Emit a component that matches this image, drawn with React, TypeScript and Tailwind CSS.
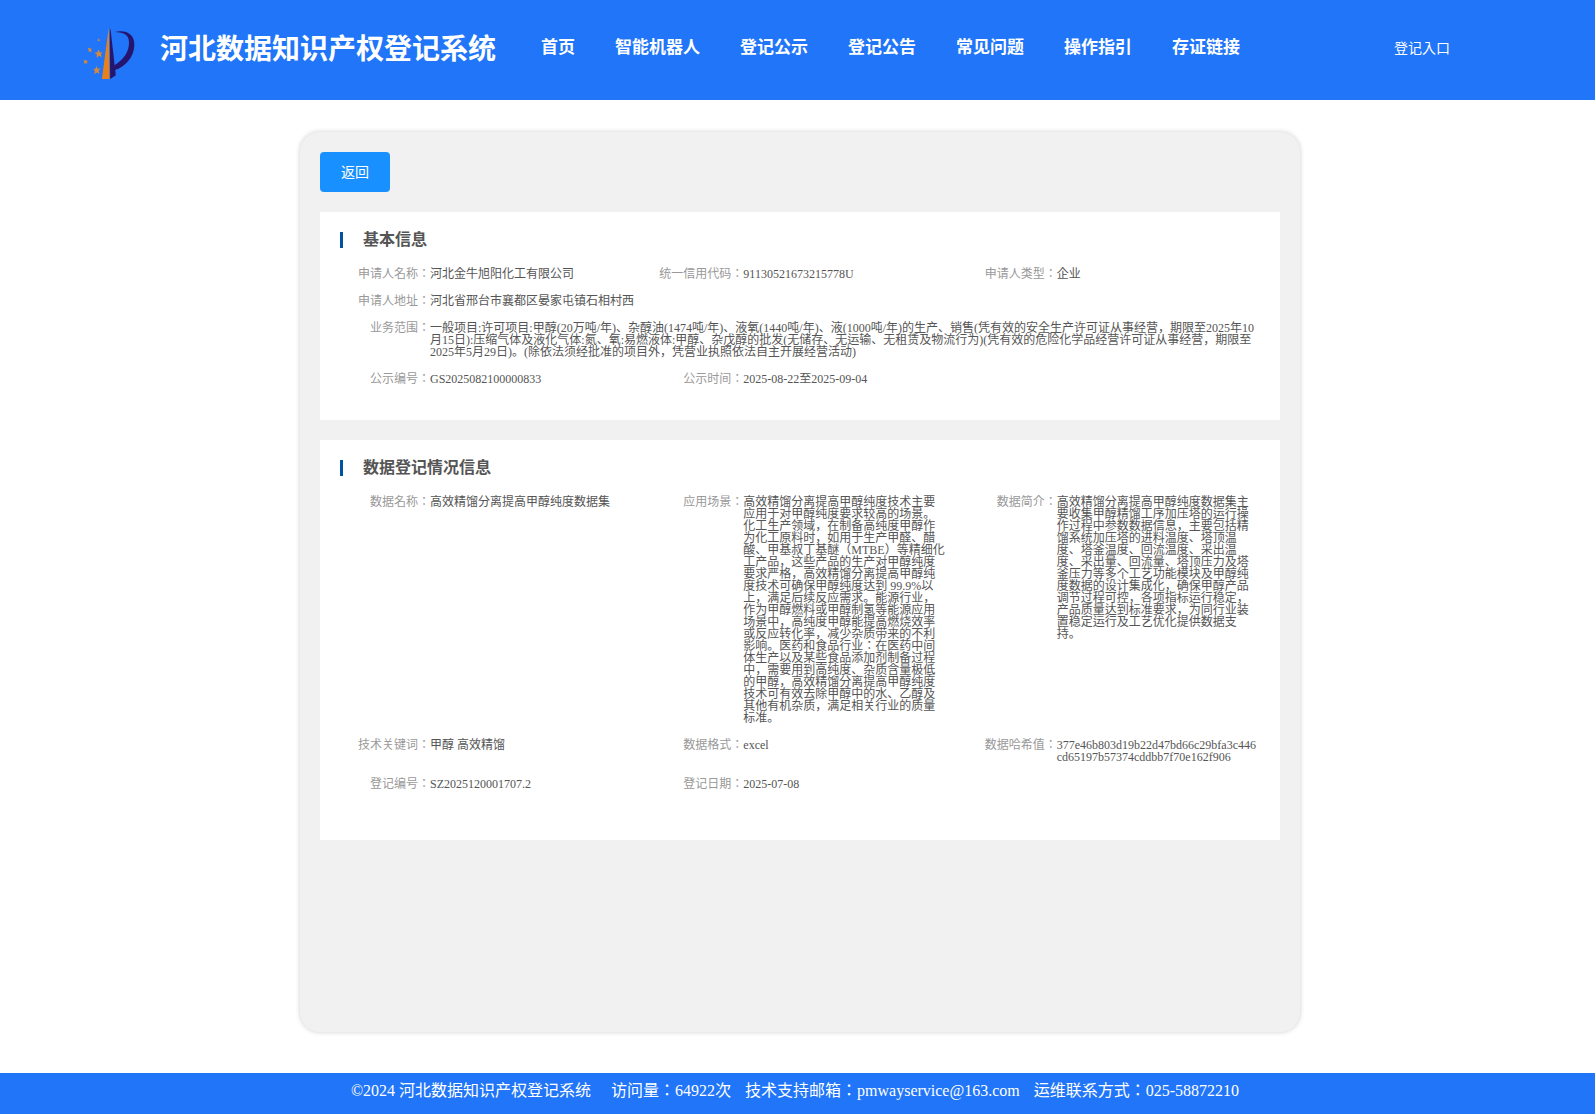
// App.tsx
type Item = {
  label: string;
  value: string;
  full?: boolean;
};

const navLinks = ['首页', '智能机器人', '登记公示', '登记公告', '常见问题', '操作指引', '存证链接'];

const basicInfo: Item[] = [
  { label: '申请人名称', value: '河北金牛旭阳化工有限公司' },
  { label: '统一信用代码', value: '91130521673215778U' },
  { label: '申请人类型', value: '企业' },
  { label: '申请人地址', value: '河北省邢台市襄都区晏家屯镇石相村西', full: true },
  {
    label: '业务范围',
    value:
      '一般项目:许可项目:甲醇(20万吨/年)、杂醇油(1474吨/年)、液氧(1440吨/年)、液(1000吨/年)的生产、销售(凭有效的安全生产许可证从事经营，期限至2025年10月15日):压缩气体及液化气体:氮、氧:易燃液体:甲醇、杂戊醇的批发(无储存、无运输、无租赁及物流行为)(凭有效的危险化学品经营许可证从事经营，期限至2025年5月29日)。(除依法须经批准的项目外，凭营业执照依法自主开展经营活动)',
    full: true,
  },
  { label: '公示编号', value: 'GS2025082100000833' },
  { label: '公示时间', value: '2025-08-22至2025-09-04' },
];

const dataInfo: Item[] = [
  { label: '数据名称', value: '高效精馏分离提高甲醇纯度数据集' },
  {
    label: '应用场景',
    value:
      '高效精馏分离提高甲醇纯度技术主要应用于对甲醇纯度要求较高的场景。化工生产领域，在制备高纯度甲醇作为化工原料时，如用于生产甲醛、醋酸、甲基叔丁基醚（MTBE）等精细化工产品，这些产品的生产对甲醇纯度要求严格，高效精馏分离提高甲醇纯度技术可确保甲醇纯度达到 99.9%以上，满足后续反应需求。能源行业，作为甲醇燃料或甲醇制氢等能源应用场景中，高纯度甲醇能提高燃烧效率或反应转化率，减少杂质带来的不利影响。医药和食品行业：在医药中间体生产以及某些食品添加剂制备过程中，需要用到高纯度、杂质含量极低的甲醇，高效精馏分离提高甲醇纯度技术可有效去除甲醇中的水、乙醇及其他有机杂质，满足相关行业的质量标准。',
  },
  {
    label: '数据简介',
    value:
      '高效精馏分离提高甲醇纯度数据集主要收集甲醇精馏工序加压塔的运行操作过程中参数数据信息，主要包括精馏系统加压塔的进料温度、塔顶温度、塔釜温度、回流温度、采出温度、采出量、回流量、塔顶压力及塔釜压力等多个工艺功能模块及甲醇纯度数据的设计集成化，确保甲醇产品调节过程可控，各项指标运行稳定，产品质量达到标准要求，为同行业装置稳定运行及工艺优化提供数据支持。',
  },
  { label: '技术关键词', value: '甲醇 高效精馏' },
  { label: '数据格式', value: 'excel' },
  { label: '数据哈希值', value: '377e46b803d19b22d47bd66c29bfa3c446cd65197b57374cddbb7f70e162f906' },
  { label: '登记编号', value: 'SZ2025120001707.2' },
  { label: '登记日期', value: '2025-07-08' },
];

function Logo() {
  return (
    <svg viewBox="20 14 160 160" className="w-[53px] h-[53px] mt-2.5 shrink-0" aria-hidden="true">
      {/* Tower */}
      <path d="M98 14 L100 171 L77 171 Z" fill="#e8811c" />
      <path d="M101 16 L104 28 L119 160 L102 171 Z" fill="#26156f" />
      {/* Bowl of the P */}
      <path
        d="M116 29 C148 21 176 34 175 68 C174 108 145 134 116 144 L114 130 C142 113 159 90 159 61 C159 39 145 29 116 29 Z"
        fill="#26156f"
      />
      {/* Stars */}
      <g fill="#d9883a">
        <path d="M67 82 L71 91 L79 90 L74 97 L77 105 L69 101 L61 107 L62 97 L54 92 L63 91 Z" />
        <path d="M60 131 L64 140 L73 139 L67 146 L70 155 L62 151 L54 157 L56 147 L51 141 L58 140 Z" />
        <path d="M28 111 L30 116 L35 116 L32 120 L33 126 L28 123 L22 125 L24 119 L21 114 L27 115 Z" />
        <path d="M37 76 L41 80 L47 79 L44 84 L46 90 L41 88 L36 89 L38 84 L34 80 Z" />
        <path d="M68 47 L69 51 L71 54 L68 57 L63 54 L66 52 Z" />
      </g>
    </svg>
  );
}

function InfoSection({ title, items, className }: { title: string; items: Item[]; className: string }) {
  return (
    <section className={`bg-white mt-5 pt-5 pl-5 ${className}`}>
      <h2 className="border-l-3 border-[#00549b] pl-5 text-base leading-4 font-bold text-[#555]">{title}</h2>
      <dl className="grid grid-cols-3 mt-5 text-xs leading-3">
        {items.map((item) => (
          <div key={item.label} className={`flex pr-5 pb-[15px] ${item.full ? 'col-span-3' : ''}`}>
            <dt className="w-[90px] shrink-0 text-right text-[#999]">{item.label}：</dt>
            <dd className="min-w-0 flex-1 wrap-break-word text-[#555]">{item.value}</dd>
          </div>
        ))}
      </dl>
    </section>
  );
}

export default function App() {
  return (
    <div className="min-h-screen flex flex-col bg-white font-['Liberation_Serif','Noto_Sans_CJK_JP',serif]">
      <header className="flex items-center min-h-[100px] pl-[83px] pr-[145px] pb-1 bg-[#2075f8] text-white">
        <Logo />
        <h1 className="ml-6 pt-1 text-[28px] leading-10 font-bold whitespace-nowrap">河北数据知识产权登记系统</h1>
        <nav className="flex gap-10 ml-[45px] text-[17px] leading-6 font-bold whitespace-nowrap">
          {navLinks.map((link) => (
            <a key={link} href="#">
              {link}
            </a>
          ))}
        </nav>
        <a href="#" className="ml-auto pt-0.5 text-sm whitespace-nowrap">
          登记入口
        </a>
      </header>

      <main className="grow pt-8 pb-[41px] pl-[5px]">
        <div className="max-w-[1000px] min-h-[900px] mx-auto p-5 rounded-[20px] bg-[#f1f1f1] shadow-[0_0_5px_rgba(0,0,0,0.2)]">
          <button type="button" className="block w-[70px] h-10 pt-0.5 rounded bg-[#1890ff] text-sm text-white">
            返回
          </button>
          <InfoSection title="基本信息" items={basicInfo} className="pb-5" />
          <InfoSection title="数据登记情况信息" items={dataInfo} className="pb-[35px]" />
        </div>
      </main>

      <footer className="flex justify-center min-h-[41px] pt-1.5 pr-[5px] bg-[#2075f8] text-base leading-6 text-white">
        <span>©2024 河北数据知识产权登记系统</span>
        <span className="ml-5">访问量：64922次</span>
        <span className="ml-3.5">技术支持邮箱：pmwayservice@163.com</span>
        <span className="ml-3.5">运维联系方式：025-58872210</span>
      </footer>
    </div>
  );
}
